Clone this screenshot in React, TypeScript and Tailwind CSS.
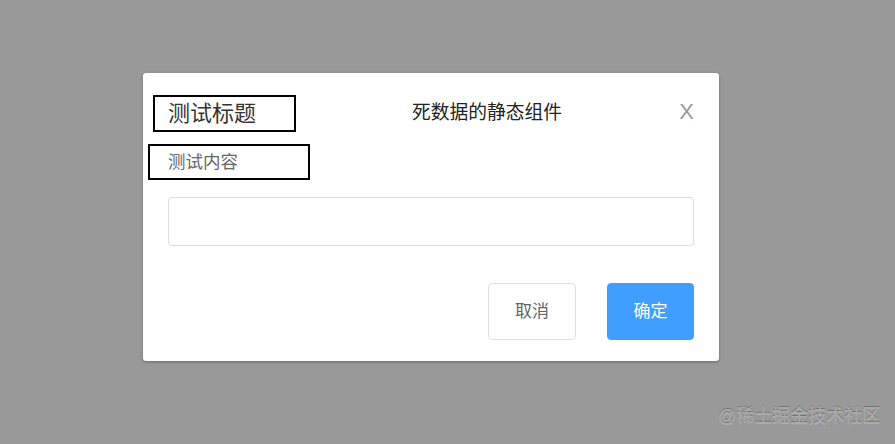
export default function App() {
  return (
    <div
      className="relative flex h-[444px] w-[895px] flex-col bg-[#999999]"
      style={{ fontFamily: '"Liberation Sans", "Noto Sans CJK SC", sans-serif' }}
    >
      <div className="ml-[143px] mt-[73px] flex h-[288px] w-[576px] flex-col rounded-[3px] bg-white shadow-[0_1px_3px_rgba(0,0,0,0.3)]">
        {/* header */}
        <div className="flex items-start pt-[22px] pr-[25px]">
          <div className="ml-[10px] flex h-[37px] w-[143px] items-center border-2 border-black pl-[13px] text-[22px] text-[#333]">
            测试标题
          </div>
          <div className="ml-[116px] mt-[4px] text-[18.75px] text-[#222]">死数据的静态组件</div>
          <div className="flex-1" />
          <div className="mt-[2px] text-[22px] leading-[30px] text-[#999]">X</div>
        </div>
        {/* body */}
        <div className="ml-[5px] mt-[12px] flex h-[36px] w-[162px] items-center border-2 border-black pl-[18px] text-[17.5px] text-[#666]">
          测试内容
        </div>
        <div className="mx-[25px] mt-[17px]">
          <input className="h-[49px] w-full rounded-[4px] border border-[#dcdfe6] bg-white px-3 outline-none" />
        </div>
        {/* footer */}
        <div className="mt-[37px] flex justify-end gap-[31px] px-[25px]">
          <button className="h-[57px] w-[88px] rounded-[4px] border border-[#dcdfe6] bg-white text-[17px] text-[#606266]">
            取消
          </button>
          <button className="h-[57px] w-[87px] rounded-[4px] border border-[#409eff] bg-[#409eff] text-[17px] text-white">
            确定
          </button>
        </div>
      </div>
      <div className="absolute left-[718px] top-[403px] text-[18px] text-[#aaaaaa] [text-shadow:0_-1px_0_rgba(0,0,0,0.25),0_1px_0_rgba(255,255,255,0.2)]">
        @稀土掘金技术社区
      </div>
    </div>
  )
}
